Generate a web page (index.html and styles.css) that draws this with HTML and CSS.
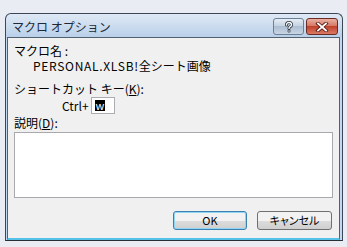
FILE: index.html
```html
<!DOCTYPE html>
<html>
  <head>
    <title>マクロ オプション</title>
    <link rel="stylesheet" href="styles.css">
  </head>
  <body>
    <div class="window">
      <div class="titlebar">
        <span class="title">マクロ オプション</span>
        <div class="caption-buttons">
          <button class="cap-btn help-btn">
            <svg width="12" height="12" viewBox="0 0 12 12">
              <path d="M3.5 4 Q3.5 1.5 6 1.5 Q8.5 1.5 8.5 3.8 Q8.5 5.2 6.8 5.9 Q6 6.3 6 7.4" fill="none" stroke="#2b3441" stroke-width="3" stroke-linecap="round"/>
              <path d="M3.5 4 Q3.5 1.5 6 1.5 Q8.5 1.5 8.5 3.8 Q8.5 5.2 6.8 5.9 Q6 6.3 6 7.4" fill="none" stroke="#fff" stroke-width="1.4" stroke-linecap="round"/>
              <circle cx="6" cy="10" r="1.5" fill="#2b3441"/>
              <circle cx="6" cy="10" r="0.8" fill="#fff"/>
            </svg>
          </button>
          <button class="cap-btn close-btn">
            <svg width="14" height="10" viewBox="0 0 14 10">
              <path d="M3 1.5 L11 8.5 M11 1.5 L3 8.5" stroke="#5a1c14" stroke-width="3.6" stroke-linecap="square"/>
              <path d="M3 1.5 L11 8.5 M11 1.5 L3 8.5" stroke="#fff" stroke-width="1.8" stroke-linecap="square"/>
            </svg>
          </button>
        </div>
      </div>
      <div class="client">
        <div class="label first">マクロ名 :</div>
        <div class="macro-name"><span class="latin">PERSONAL.XLSB!</span>全シート画像</div>
        <div class="label shortcut">ショートカット キー(<u>K</u>):</div>
        <div class="key-row">
          <span class="ctrl">Ctrl+</span>
          <span class="key-box"><span class="key-sel">w</span></span>
        </div>
        <div class="label">説明(<u>D</u>):</div>
        <div class="desc-box"></div>
        <div class="button-row">
          <button class="button default-button">OK</button>
          <button class="button">キャンセル</button>
        </div>
      </div>
    </div>
  </body>
</html>
```
FILE: styles.css
```css
body{
  margin: 0;
  background-color: #e9edf3;
  font-family: "Noto Sans CJK JP", "Noto Sans", sans-serif;
  font-size: 12px;
  color: #000;
}

.window{
  margin: 13px 0 0 5px;
  width: 333px;
  border: 1px solid #3b4756;
  border-bottom-color: #2a2f36;
  border-radius: 6px 6px 0 0;
  padding: 0 2px 0 1px;
  background: linear-gradient(#dfe9f5, #b9d0e9 23px, #c2d8ee 23px);
}

.titlebar{
  height: 23px;
  display: flex;
  justify-content: space-between;
  padding-left: 5px;
}
.title{
  line-height: 23px;
  padding-top: 1px;
  color: #1e2a38;
}
.caption-buttons{
  display: flex;
  gap: 2px;
  padding: 4px 2px 0 0;
}
.cap-btn{
  height: 17px;
  padding: 0;
  border-radius: 3px;
  display: flex;
  align-items: center;
  justify-content: center;
}
.help-btn{
  width: 31px;
  border: 1px solid #6d7f95;
  background: linear-gradient(#e6edf5, #c2d0e0 50%, #aebfd3 50%, #c8d6e4);
}
.close-btn{
  width: 32px;
  border: 1px solid #6b2a22;
  background: linear-gradient(#eab0a3, #d3735f 50%, #c0412e 50%, #d97a63);
}

.client{
  height: 200px;
  border: 1px solid #52606f;
  border-bottom: 2px solid #56c1e8;
  background-color: #f0f0f0;
  padding: 0 6px;
}
.label{
  line-height: 15px;
}
.label.first{
  margin-top: 5px;
}
.macro-name{
  line-height: 15px;
  padding-left: 19px;
}
.latin{
  letter-spacing: 0.7px;
}
.shortcut{
  margin-top: 8px;
}
.key-row{
  display: flex;
  align-items: center;
  margin: 1px 0 1px 48px;
  gap: 2px;
}
.key-box{
  box-sizing: border-box;
  width: 24px;
  height: 17px;
  border: 1px solid #abadb3;
  background-color: #fff;
  display: flex;
  align-items: center;
  padding-left: 3px;
}
.key-sel{
  background-color: #000;
  color: #fff;
  font-size: 11px;
  line-height: 11px;
  padding: 0 1px;
}
.desc-box{
  margin-top: 2px;
  width: 317px;
  height: 64px;
  border: 1px solid #a9a9ad;
  background-color: #fff;
}
.button-row{
  display: flex;
  justify-content: flex-end;
  gap: 10px;
  margin: 13px 1px 0 0;
}
.button{
  width: 75px;
  height: 19px;
  padding: 0;
  font-family: "Noto Sans CJK JP", "Noto Sans", sans-serif;
  font-size: 11px;
  font-feature-settings: "palt";
  line-height: 15px;
  border: 1px solid #707070;
  border-radius: 3px;
  background: linear-gradient(#f2f2f2 50%, #dddddd 50%, #cfcfcf);
}
.default-button{
  width: 74px;
  border-color: #3c7fb1;
  box-shadow: inset 0 0 0 1px #8fd6f5;
}
```
